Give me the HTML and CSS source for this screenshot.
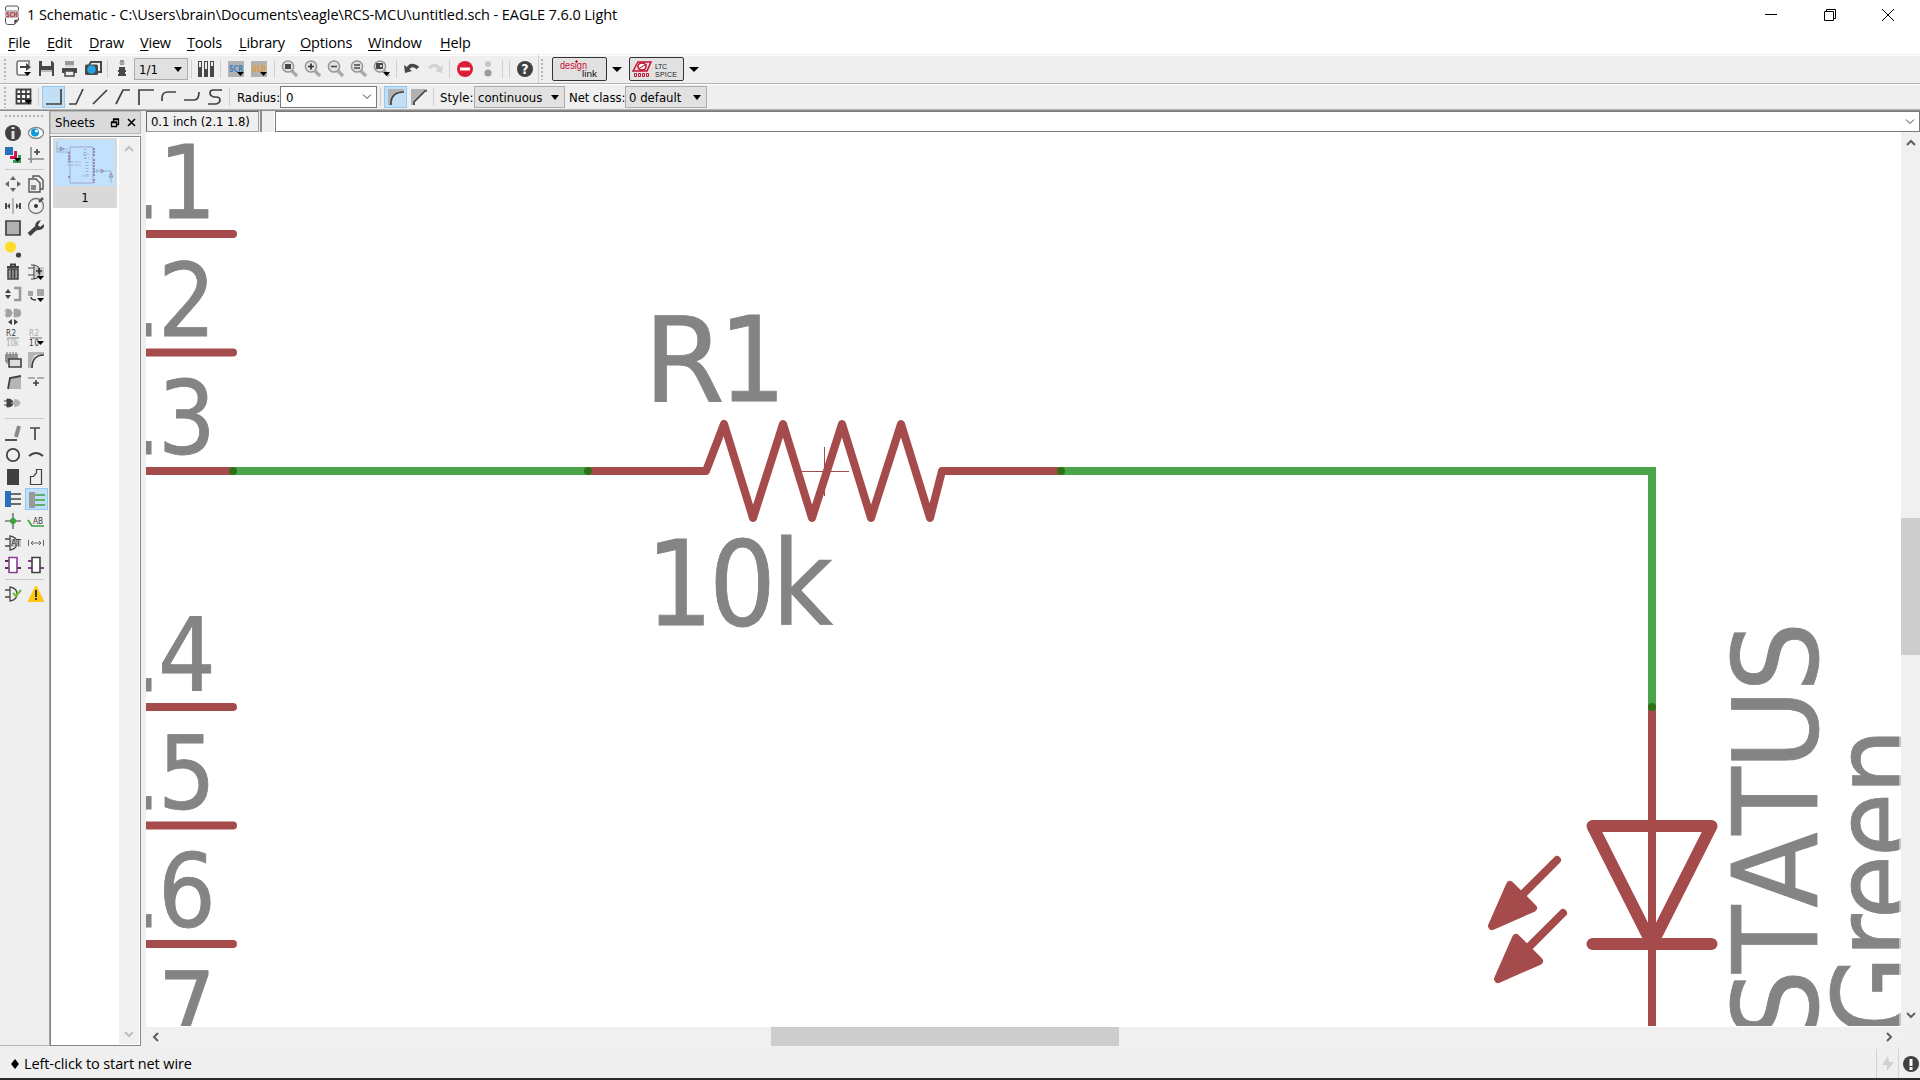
FILE: index.html
```html
<!DOCTYPE html>
<html lang="en">
<head>
<meta charset="utf-8">
<title>1 Schematic - EAGLE 7.6.0 Light</title>
<link rel="stylesheet" href="styles.css">
</head>
<body>
<svg width="0" height="0" class="defs"><defs>
<path id="tri" d="M10 11h7l-3.500 4z" fill="#000"/>
<g id="lens"><path d="M11 11l5 5" stroke="#a9a9a9" stroke-width="3.200"/><circle cx="7" cy="6.500" r="5.600" fill="#e2e2e2" stroke="#969696" stroke-width="1.500"/></g>
</defs></svg>
<div class="window">
<header class="titlebar">
<svg class="app" width="14" height="20" viewBox="0 0 14 20"><path d="M2 1h10q1.500 0 1.500 2v12l-4 4.500h-7Q.500 19 .500 17V3Q.500 1 2 1z" fill="#fafafa" stroke="#555"/><path d="M9 19l.500-4 4-.500z" fill="#333"/><path d="M0 5h14v8H0z" fill="#b9b9b9"/><text x="1" y="11.700" font-size="7" font-weight="bold" fill="#c83c4b" textLength="12" lengthAdjust="spacingAndGlyphs">SCH</text></svg>
<h1>1 Schematic - C:\Users\brain\Documents\eagle\RCS-MCU\untitled.sch - EAGLE 7.6.0 Light</h1>
<div class="controls">
<svg viewBox="0 0 14 14"><path d="M1 6.500h12" /></svg>
<svg viewBox="0 0 14 14"><path d="M1.500 3.500h9v9h-9zM3.500 3V1.500h9v9H11"/></svg>
<svg viewBox="0 0 14 14"><path d="M1 1l12 12M13 1L1 13"/></svg>
</div>
</header>
<nav class="menu"><span><u>F</u>ile</span><span><u>E</u>dit</span><span><u>D</u>raw</span><span><u>V</u>iew</span><span><u>T</u>ools</span><span><u>L</u>ibrary</span><span><u>O</u>ptions</span><span><u>W</u>indow</span><span><u>H</u>elp</span></nav>

<div class="bar actions">
<i class="grip"></i>
<svg class="ic"><path d="M14 5V1H3q-1 1-1 2v10q0 2 2 2h8" fill="#fff" stroke="#777" stroke-width="1.600"/><path d="M5 7h7" stroke="#444" stroke-width="2"/><path d="M11 3l5 4-5 4z" fill="#444"/><use href="#tri" x="-1" y="1"/></svg>
<svg class="ic"><path d="M1 1h13l2 2v13H1z" fill="#484846"/><path d="M4 1h9v5H4zM3 10h11v6H3z" fill="#eee"/><path d="M3 10h11v2H3z" fill="#bbb"/></svg>
<svg class="ic"><path d="M4 1h9v4H4z" fill="#999"/><path d="M1 8h15v5H1z" fill="#484846"/><path d="M4 11h9v5H4z" fill="#eee" stroke="#484846" stroke-width="1.500"/><path d="M4 6h9" stroke="#bbb"/></svg>
<svg class="ic"><path d="M5 5l2-3h10v10h-3" fill="none" stroke="#484846" stroke-width="2"/><rect x="1" y="4.500" width="13" height="10.500" rx="1.500" fill="#484846"/><circle cx="7.500" cy="9.500" r="4.300" fill="#26a0e0"/></svg>
<i class="sep s6"></i>
<svg class="ic"><path d="M9 0v5" stroke="#999" stroke-width="4"/><path d="M6.500 3h5" stroke="#aaa" stroke-width="2"/><path d="M6 7h6v3h1v2h-1v2h1v2H5v-2h1v-2H5v-2h1z" fill="#484846"/></svg>
<div class="combo page">1/1<b></b></div>
<i class="sep s6"></i>
<svg class="ic"><g fill="#484846"><path d="M1 1h4v16H1zM7 1h4v16H7zM13 1h4v16h-4z"/></g><path d="M2 2h2v5H2zM8 2h2v7H8zM14 2h2v4h-2z" fill="#eee"/></svg>
<i class="sep s7"></i>
<svg class="ic"><path d="M1 1h16v16H1z" fill="#b2b2b2"/><text x="2" y="11.500" font-size="8.500" textLength="14" lengthAdjust="spacingAndGlyphs" fill="#3b7fc4" font-weight="bold">SCR</text><use href="#tri" y="1"/></svg>
<svg class="ic"><path d="M1 1h16v16H1z" fill="#b2b2b2"/><text x="2" y="11.500" font-size="8.500" textLength="14" lengthAdjust="spacingAndGlyphs" fill="#e39a35" font-weight="bold">ULP</text><use href="#tri" y="1"/></svg>
<i class="sep s8"></i>
<svg class="ic"><use href="#lens"/><path d="M4 4h6v5H4z" fill="#484846"/></svg>
<svg class="ic"><use href="#lens"/><path d="M4 6.500h6M7 3.500v6" stroke="#333" stroke-width="1.700"/></svg>
<svg class="ic"><use href="#lens"/><path d="M4 6.500h6" stroke="#444" stroke-width="1.500"/></svg>
<svg class="ic"><use href="#lens"/><path d="M4 5h6M4 8h6" stroke="#444" stroke-width="1.500"/></svg>
<svg class="ic"><use href="#lens"/><path d="M3 3h7v6H3z" fill="#484846"/><path d="M7 5h2v2H7z" fill="#ddd"/><use href="#tri" y="1"/></svg>
<i class="sep s7"></i>
<svg class="ic"><path d="M4 10Q8 2 15 8" fill="none" stroke="#484846" stroke-width="3.600"/><path d="M1 5l1 8 7-2z" fill="#484846"/></svg>
<svg class="ic"><path d="M14 10Q10 2 3 8" fill="none" stroke="#d2d2d2" stroke-width="3.200"/><path d="M17 5l-1 8-7-2z" fill="#d2d2d2"/></svg>
<i class="sep s7"></i>
<svg class="ic"><circle cx="9" cy="9" r="8" fill="#dc1e37"/><path d="M4 9h10" stroke="#fff" stroke-width="3"/></svg>
<svg class="ic"><circle cx="9" cy="4" r="3" fill="#c6c6c6"/><circle cx="9" cy="13" r="3.500" fill="#999"/></svg>
<i class="sep s7"></i><i class="sep s7"></i>
<svg class="ic"><circle cx="9" cy="9" r="8" fill="#41413f"/><text x="9" y="14" font-size="14" font-weight="bold" text-anchor="middle" fill="#fff">?</text></svg>
<i class="sep s4 dark"></i><i class="grip g2"></i>
<button class="plug"><svg width="53" height="22"><text x="7" y="11" font-size="11" fill="#c80f32" textLength="27" lengthAdjust="spacingAndGlyphs">design</text><text x="29" y="19" font-size="9" fill="#111" textLength="15" lengthAdjust="spacingAndGlyphs">link</text><path d="M22 3h3v1h-3zM23 2h1v3h-1z" fill="#c80f32"/></svg></button>
<b class="drop"></b>
<button class="plug"><svg width="53" height="22"><path d="M3 13L8 4h13l-4 9z" fill="none" stroke="#c80f32" stroke-width="1.500"/><ellipse cx="12" cy="8.500" rx="4" ry="3.500" fill="#fff" stroke="#c80f32" stroke-width="1.500"/><path d="M8 11l9-5M4.500 15.500h2v3h-2zM8.500 15.500h2v3h-2zM12.500 15.500h2v3h-2zM16.500 15.500h2v3h-2z" fill="none" stroke="#c80f32"/><text x="25" y="11" font-size="7" textLength="12" fill="#222">LTC</text><text x="25" y="19" font-size="7" textLength="22" fill="#222">SPICE</text></svg></button>
<b class="drop"></b>
</div>

<div class="bar params">
<i class="grip"></i>
<svg class="ic"><path d="M1.500 1.500h14v14h-14zM6 1v15M11 1v15M1 6h15M1 11h15" fill="#fff" stroke="#41413f" stroke-width="1.800"/><use href="#tri" y="1"/></svg>
<i class="sep s7"></i>
<div class="on"><svg class="ic bend"><path d="M1 16h15V1"/></svg></div>
<svg class="ic bend"><path d="M1 16h7l7-15"/></svg>
<svg class="ic bend"><path d="M2 16L16 2"/></svg>
<svg class="ic bend"><path d="M2 16L9 2h7"/></svg>
<svg class="ic bend"><path d="M2 17V2h15"/></svg>
<svg class="ic bend"><path d="M2 13V10q0-6 6-6h8"/></svg>
<svg class="ic bend"><path d="M1 12h10q5 0 5-8"/></svg>
<svg class="ic bend"><path d="M16 2H7Q4 2 4 5t4 4h2q4 0 4 3t-4 4H2"/></svg>
<i class="sep s7"></i>
<label class="radius">Radius:</label>
<div class="combo edit">0<svg width="10" height="6"><path d="M1 .500l4 4 4-4" fill="none" stroke="#444"/></svg></div>
<i class="sep s7"></i>
<div class="on"><svg class="ic miter"><path d="M1 1h16v16H1z" fill="#b2b2b2"/><path d="M4 17v-3Q5 4 17 4v13z" fill="#c3dff5"/><path d="M4 17v-3Q5 4 17 4"/></svg></div>
<svg class="ic miter"><path d="M1 1h16v16H1z" fill="#b2b2b2"/><path d="M4 17v-3L15 3h2v14z" fill="#f0f0f0"/><path d="M4 17v-3L15 3h2"/></svg>
<i class="sep s7"></i>
<label class="style">Style:</label><div class="combo cont">continuous<b></b></div>
<label class="net">Net class:</label><div class="combo def">0 default<b></b></div>
</div>

<main>
<aside class="tools">
<i class="hgrip"></i>
<div class="pair">
<svg class="ic"><circle cx="9" cy="9" r="8" fill="#41413f"/><path d="M9 3v2M9 7v8" stroke="#ddd" stroke-width="3"/></svg>
<svg class="ic"><ellipse cx="9" cy="9" rx="7.500" ry="5.500" fill="#fff" stroke="#888" stroke-width="1.300"/><circle cx="8" cy="8.500" r="4" fill="#0a9be1"/><circle cx="9.500" cy="7" r="1.600" fill="#fff"/></svg>
<svg class="ic"><path d="M1 1h8v8H1z" fill="#2a70b8"/><path d="M10 5h3v8H6v-3h4z" fill="#d7144b"/><path d="M14 9h3v8H9v-3h5z" fill="#32a05f"/><use href="#tri" y="1"/></svg>
<svg class="ic"><path d="M4 1v16M1 13h16" stroke="#888" stroke-width="1.500"/><path d="M10 3v6M7 6h6" stroke="#41413f" stroke-width="1.600"/></svg>
</div><hr>
<div class="pair">
<svg class="ic"><path d="M9 1l3 4H6zM9 17l3-4H6zM1 9l4-3v6zM17 9l-4-3v6z" fill="#666"/></svg>
<svg class="ic"><path d="M6 3V1h6l4 4v9h-3M2 4h7l4 4v9H2z" fill="#eee" stroke="#555" stroke-width="1.400"/><path d="M4 10h5v5H4z" fill="#888"/></svg>
<svg class="ic"><path d="M9 1v16" stroke="#999" stroke-width="1.300"/><path d="M1 6h2v6H1zM15 6h2v6h-2zM6 6v6L3 9zM12 6v6l3-3z" fill="#484846"/></svg>
<svg class="ic"><circle cx="9" cy="9" r="7.500" fill="none" stroke="#777" stroke-width="1.300"/><circle cx="9" cy="9" r="2" fill="#333"/><path d="M12 5l4-4" stroke="#555" stroke-width="2.500"/></svg>
<svg class="ic"><path d="M2 2h14v14H2z" fill="#b0b0b0" stroke="#41413f" stroke-width="1.700"/></svg>
<svg class="ic"><path d="M2 15.500L9 9" stroke="#41413f" stroke-width="4"/><path d="M8 10q-1-8 6-9l-3 5 2 2 4-3q1 7-9 6z" fill="#41413f"/></svg>
<svg class="ic"><circle cx="6.500" cy="6" r="5.500" fill="#ffdc28"/><circle cx="14.500" cy="14" r="2.600" fill="#41413f"/></svg><span></span>
<svg class="ic"><path d="M3 4h12M7 3V1.500h4V3" fill="none" stroke="#41413f" stroke-width="2"/><path d="M4 6v10h10V6z" fill="#999" stroke="#41413f" stroke-width="1.500"/><path d="M7.500 6v9M10.500 6v9" stroke="#41413f" stroke-width="1.500"/></svg>
<svg class="ic"><path d="M4 2h3q6 1 6 7t-6 7H4M7 2v14M1 5h6M1 12h6" fill="none" stroke="#484846" stroke-width="1.200"/><path d="M7 4h10v10H7z" fill="#9996"/><path d="M12 5v6M9 8h6" stroke="#333" stroke-width="1.700"/><use href="#tri" y="2"/></svg>
<svg class="ic"><path d="M10 3h6v12h-6" fill="none" stroke="#999" stroke-width="2.500"/><path d="M4 4l3 4H1zM4 14l3-4H1zM7 9h3" fill="#41413f"/></svg>
<svg class="ic"><path d="M1 6h5v5H1zM10 4h7v7h-7z" fill="#a5a5a5"/><path d="M4 12q0 3 5 3" fill="none" stroke="#444" stroke-width="1.500"/><use href="#tri" y="2"/></svg>
<svg class="ic"><path d="M2 2h2q4 0 4 4T4 10H2zM10 2h3q4 0 4 4t-4 4h-3zM0 4h2M0 8h2M8 6h9" fill="#a2a2a2" stroke="#a2a2a2" stroke-width=".6"/><path d="M8 12v6l-4-3zM10 12v6l4-3z" fill="#41413f"/></svg><span></span>
<svg class="ic"><text x="2" y="7" font-size="8" fill="#333" textLength="10">R2</text><path d="M3 9h12" stroke="#aaa" stroke-width="1.500"/><text x="2" y="17" font-size="8" fill="#aaa" textLength="13">10k</text></svg>
<svg class="ic"><text x="2" y="7" font-size="8" fill="#aaa" textLength="10">R2</text><path d="M3 9h12" stroke="#999" stroke-width="1.500"/><text x="2" y="17" font-size="8" fill="#333" textLength="10">10</text><use href="#tri" y="1"/></svg>
<svg class="ic"><path d="M1 3h13v8H1z" fill="#999"/><path d="M3 1v12M6 1v12M9 1v12M12 1v12" stroke="#888" stroke-width="1.300"/><path d="M5 8h12v8H5z" fill="#ddd" stroke="#41413f" stroke-width="1.600"/></svg>
<svg class="ic"><path d="M1 1h16v3H8q-4 4-4 13H1z" fill="#b5b5b5"/><path d="M5 17Q5 4 17 4" fill="none" stroke="#41413f" stroke-width="1.700"/></svg>
<svg class="ic"><path d="M4 16L6 5l11-2v13z" fill="#b5b5b5"/><path d="M4 16L6 5l11-2" fill="none" stroke="#41413f" stroke-width="1.800"/></svg>
<svg class="ic"><path d="M1 5h7M10 5h7" stroke="#999" stroke-width="1.600"/><path d="M9 7v6M6 10h6" stroke="#41413f" stroke-width="1.600"/></svg>
<svg class="ic"><path d="M3 4q6 0 6 4T3 12zM0 6h3M0 10h3" fill="#41413f" stroke="#41413f"/><path d="M10 4q6 0 6 4t-6 4z" fill="#b5b5b5"/><path d="M7 8h10" stroke="#b5b5b5"/></svg><span></span>
</div><hr>
<div class="pair">
<svg class="ic"><path d="M1 16h12" stroke="#41413f" stroke-width="1.800"/><path d="M12 13l3-11" stroke="#888" stroke-width="4"/></svg>
<svg class="ic"><path d="M3 4h10M8 4v12" stroke="#484846" stroke-width="1.700"/></svg>
<svg class="ic"><circle cx="9" cy="9" r="6.200" fill="none" stroke="#41413f" stroke-width="1.800"/></svg>
<svg class="ic"><path d="M2 10q7-6 14 0" fill="none" stroke="#41413f" stroke-width="2"/></svg>
<svg class="ic"><path d="M3 1h12v16H3z" fill="#41413f"/></svg>
<svg class="ic"><path d="M3.500 16.500V8.500h3L9.500 5V1.500h5v15z" fill="none" stroke="#41413f" stroke-width="1.200"/></svg>
<svg class="ic"><path d="M1 1h6v16H1z" fill="#2a70b8"/><path d="M7 4h10M7 9h10M7 14h10" stroke="#41413f" stroke-width="1.600"/></svg>
<div class="on"><svg class="ic"><path d="M2 2h6v16H2z" fill="#9a9a9a"/><path d="M8 5h10M8 10h10M8 15h10" stroke="#37a53c" stroke-width="1.600"/></svg></div>
<svg class="ic"><path d="M9 1v16M1 9h16" stroke="#777" stroke-width="1.600"/><circle cx="9" cy="9" r="3" fill="#37a53c"/></svg>
<svg class="ic"><path d="M1 8l4 6h12" fill="none" stroke="#37a53c" stroke-width="1.700"/><text x="6" y="12" font-size="9" fill="#333" textLength="10" lengthAdjust="spacingAndGlyphs">AB</text></svg>
<svg class="ic"><path d="M6 2q7 1 7 7t-7 7zM1 5h5M1 12h5" fill="none" stroke="#484846" stroke-width="1.300"/><path d="M7 5h10v8H7z" fill="#aaa9"/><text x="7" y="12" font-size="9" fill="#333" textLength="10">AT</text></svg>
<svg class="ic"><path d="M1.500 6v6M16.500 6v6M4 9h10M6 7L4 9l2 2M12 7l2 2-2 2" fill="none" stroke="#666"/></svg>
<svg class="ic"><path d="M1 5h4M1 12h4M13 12h4" stroke="#41413f" stroke-width="1.800"/><path d="M5 1.500h8v15H5z" fill="#fff" stroke="#8c3c96" stroke-width="1.600"/></svg>
<svg class="ic"><path d="M1 5h4M1 12h4M13 12h4" stroke="#8c3c96" stroke-width="1.800"/><path d="M5 1.500h8v15H5z" fill="#fff" stroke="#41413f" stroke-width="1.600"/></svg>
</div><hr>
<div class="pair">
<svg class="ic"><path d="M6 2q7 1 7 7t-7 7zM1 5h5M1 12h5" fill="none" stroke="#484846" stroke-width="1.300"/><path d="M9 8l3 3 5-6" fill="none" stroke="#6eb92d" stroke-width="2"/></svg>
<svg class="ic"><path d="M9 2l7 14H2z" fill="#ffc80f" stroke="#ffc80f" stroke-width="2" stroke-linejoin="round"/><path d="M9 5v7M9 13v2" stroke="#333" stroke-width="2"/></svg>
</div>
</aside>

<section class="sheets">
<div class="dock">Sheets<svg width="30" height="10"><path d="M1.500 4.500h5v4h-5zM3.500 4V1.500h5v5H7M1 4h6M3 1h6" fill="none" stroke="#000" stroke-width="1.300"/><path d="M18 1l7 7M25 1l-7 7" stroke="#000" stroke-width="1.600"/></svg></div>
<div class="list">
<div class="items"><figure>
<svg width="60" height="46" fill="none" stroke-width=".7"><g opacity=".75"><path d="M15 7h23v36H15z" stroke="#8a6fa5"/><path d="M2 2v10h13M3 9h10M6 7v3M38 31h18v12M42 29v4" stroke="#5a9a9f"/><path d="M5 7l4 2-4 2zM46 29l3 2-3 2zM56 33l-2 4h4z" stroke="#8d4b8b"/><path d="M12 22h14M12 25h14M13 17h3M13 21h3M28 14h6M29 18h5M27 36h8" stroke="#7e8cbf" stroke-dasharray="3 1"/><path d="M39 8v8M39 19v18M39 39v4M14 12v10M14 36v3" stroke="#806ea3" stroke-width="2" stroke-dasharray="2 1"/><path d="M30 9v11M32 22v15" stroke="#7e8cbf" stroke-width="3" stroke-dasharray="1 2" opacity=".7"/></g></svg>
<figcaption>1</figcaption></figure></div>
<div class="scroll off"><svg width="10" height="7"><path d="M1 6l4-4 4 4"/></svg><svg width="10" height="7"><path d="M1 1l4 4 4-4"/></svg></div>
</div>
</section>

<section class="editor">
<div class="cmd"><div class="coord">0.1 inch (2.1 1.8)</div><div class="mini"></div><div class="input"><svg width="10" height="6"><path d="M1 .500l4 4 4-4" fill="none" stroke="#444"/></svg></div></div>
<div class="view">
<svg class="sheet" viewBox="146 132 1755 895" width="1755" height="895">
<g class="wire red" stroke-width="8">
<path d="M140 234H233M140 352.500H233M140 471H233M140 707H233M140 825.500H233M140 944H233"/>
<path d="M588 471H706L724 424L753 518L783 424L812 518L842 424L871 518L901 424L930 518L942 471H1061"/>
<path d="M1652 707V1040"/>
<path d="M1592.500 826H1711.500L1652 944ZM1592.500 944H1711.500" stroke-width="12"/>
<path d="M1557 860L1494 923M1563 913L1500 976"/>
<path d="M1492 926L1510 885L1533 908ZM1498 979L1516 938L1539 961Z" class="fillred"/>
</g>
<path class="wire green" stroke-width="8" d="M233 471H588M1061 471H1652V707"/>
<g class="node"><circle cx="233" cy="471" r="4"/><circle cx="588" cy="471" r="4"/><circle cx="1061" cy="471" r="4"/><circle cx="1652" cy="707" r="4"/></g>
<path d="M801 471.500h48M824.500 447v49" stroke="#a54b4b" stroke-width="1"/>
<g class="label pin">
<text x="132 158.500" y="217.500">.1</text><text x="132 158" y="335.500">.2</text><text x="132 158" y="453.500">.3</text><text x="132 158" y="690.500">.4</text><text x="132 158" y="808.500">.5</text><text x="132 158" y="926.500">.6</text><text x="132 158" y="1044.500">.7</text>
</g>
<g class="label">
<text x="643.500 719" y="400.500"><tspan class="wide">R</tspan>1</text>
<text x="646 709 772" y="624.500">10k</text>
<text transform="translate(1816.500 1038) rotate(-90) scale(1.05 1)" x="-2 62 124 193.500 255.500 329.500">STATUS</text>
<text transform="translate(1917 1037) rotate(-90)" textLength="309">Green</text>
</g>
<path d="M1900 132v895M146 1026.500h1755" stroke="#fff"/>
</svg>
<div class="scroll vert"><svg width="10" height="7"><path d="M1 6l4-4 4 4"/></svg><i></i><svg width="10" height="7"><path d="M1 1l4 4 4-4"/></svg></div>
<div class="scroll horz"><svg width="7" height="10"><path d="M6 1L2 5l4 4"/></svg><i></i><svg width="7" height="10"><path d="M1 1l4 4-4 4"/></svg></div>
</div>
</section>
</main>

<footer class="status"><svg width="8" height="12"><path d="M4 1l4 5-4 5-4-5z"/></svg><span>Left-click to start net wire</span>
<div class="lights"><i><svg width="14" height="16"><path d="M7 0L1 9h5v6l7-9H8z" fill="#cfcfcf"/></svg></i><svg class="alert" width="16" height="16"><circle cx="8" cy="8" r="8" fill="#41413f"/><path d="M8 3v7M8 11v3" stroke="#fff" stroke-width="3"/></svg></div></footer>
<div class="taskbar"></div>
</div>
</body>
</html>
```
FILE: styles.css
```css
* { box-sizing: border-box; }
body { margin: 0; background: #f0f0f0; color: #000; font: 13px "DejaVu Sans Condensed", "DejaVu Sans", sans-serif; overflow: hidden; }
.defs { position: absolute; }
.window { width: 1920px; height: 1080px; display: flex; flex-direction: column; background: #efefef; }
svg { display: block; flex: none; }

.titlebar { height: 29px; background: #fff; display: flex; align-items: center; padding-left: 5px; }
.app { margin-right: 8px; }
.titlebar h1 { margin: 0; font: 14.5px "Open Sans", "Noto Sans", sans-serif; letter-spacing: -0.08px; white-space: nowrap; }
.controls { margin-left: auto; display: flex; gap: 44.500px; padding-right: 25px; }
.controls svg { width: 14px; height: 14px; fill: none; stroke: #000; }
.menu { height: 25px; background: #fff; padding: 2px 0 0 8px; display: grid; grid-template-columns: 39px 42px 51px 47px 52px 61px 68px 72px 60px; align-items: center; font: 14.5px "Open Sans", "Noto Sans", sans-serif; letter-spacing: -0.2px; }
.menu u { text-underline-offset: 2px; }

.bar { display: flex; align-items: center; border-top: 1px solid #fff; border-bottom: 1px solid #b4b4b4; }
.actions { height: 30px; border-top-color: #efefef; box-shadow: inset 0 1px #fff; }
.params { height: 26px; }
.ic { width: 18px; height: 18px; margin: 0 2.500px; overflow: visible; }
.grip { width: 12px; height: 22px; background: radial-gradient(circle, #b4b4b4 1px, transparent 1.300px) 3px 0 / 4px 4px repeat-y; }
.g2 { background-position: 0 0; }
.hgrip { display: block; height: 4px; margin: 3px 4px 4px; background: radial-gradient(circle, #b4b4b4 1px, transparent 1.300px) 0 0 / 4px 4px repeat-x; }
.sep { height: 18px; flex: none; background: linear-gradient(#cfcfcf, #cfcfcf) center / 1px 100% no-repeat; }
.s4 { width: 4px; } .s6 { width: 6px; } .s7 { width: 7px; } .s8 { width: 8px; }
.dark { height: 28px; }
.combo { height: 22px; border: 1px solid #adadad; background: #e1e1e1; display: flex; align-items: center; justify-content: space-between; padding: 0 5px 0 4px; flex: none; }
.combo b, .drop { width: 0; height: 0; border: 4px solid transparent; border-top: 5px solid #000; border-bottom: 0; flex: none; }
.page { width: 54px; margin-left: 1px; }
.edit { width: 97px; padding-left: 5px; padding-right: 4px; background: #fff; border-color: #7a7a7a; }
.cont { width: 91px; padding-left: 3px; }
.def { width: 82px; padding-left: 3px; }
.radius { width: 43px; margin-left: 4px; }
.style { width: 34px; margin-left: 3px; }
.net { width: 56px; margin-left: 4px; letter-spacing: -.1px; white-space: nowrap; }
.on { width: 23px; height: 22px; background: #c3dff5; border: 1px solid #90c8f6; display: flex; align-items: center; justify-content: center; }
.bend path, .miter path:last-child { fill: none; stroke: #41413f; stroke-width: 1.700; }
.plug { width: 55px; height: 24px; padding: 0; border: 1px solid #333; border-radius: 2px; background: #e1e1e1; flex: none; }
.drop { border-width: 5px 5px 0; margin: 0 7px 0 5px; }

main { flex: 1; min-height: 0; display: flex; border-top: 1px solid #8c8c8c; }
.tools { width: 50px; border-right: 1px solid #a0a0a0; border-bottom: 1px solid #b4b4b4; }
.pair { display: grid; grid-template-columns: 23px 23px; grid-auto-rows: 22px; align-items: center; padding-left: 1.500px; }
.tools hr { height: 1px; margin: 3px 5px; border: 0; background: #c8c8c8; }
.sheets { width: 91px; display: flex; flex-direction: column; gap: 2px; }
.dock { height: 23px; background: #dadada; border: 1px solid #b9b9b9; display: flex; align-items: center; justify-content: space-between; padding-left: 4px; }
.list { flex: 1; border: 1px solid #828790; display: flex; background: #fff; padding: 1px; }
.items { width: 67px; padding-left: 1px; }
figure { margin: 0; width: 64px; height: 70px; background: #d9d9d9; padding: 2px; }
figure svg { background: #c2e1fd; }
figcaption { text-align: center; padding-top: 4px; }
.scroll { background: #f0f0f0; display: flex; flex-direction: column; align-items: center; }
.scroll path { fill: none; stroke: #606060; stroke-width: 2; }
.scroll svg:last-child { margin-top: auto; }
.scroll.off { width: 20px; padding: 7px 0 6px; }
.scroll.off path { stroke: #bfbfbf; }
.editor { flex: 1; padding-left: 5px; display: flex; flex-direction: column; }
.cmd { height: 21px; display: flex; }
.coord { width: 113px; border: 1px solid #a0a0a0; border-top-color: #696969; border-left-color: #696969; padding: 2px 4px; white-space: nowrap; letter-spacing: -.1px; }
.mini { width: 15px; border-left: 2px solid #8c8c8c; border-right: 1px solid #fff; margin-left: 1px; }
.input { flex: 1; background: #fff; border: 1px solid #7a7a7a; display: flex; align-items: center; justify-content: flex-end; padding-right: 4px; }
.view { flex: 1; display: grid; grid-template: 895px 1fr / 1755px 1fr; }
.sheet { background: #fff; }
.vert { padding: 7px 0 8px; }
.vert i { width: 19px; height: 137px; background: #cdcdcd; margin-top: 372px; }
.horz { flex-direction: row; padding: 0 8px 0 6px; }
.horz i { width: 348px; height: 19px; background: #cdcdcd; margin-left: 612px; align-self: flex-start; }
.scroll.horz svg:last-child { margin: 0 0 0 auto; }
.wire { fill: none; stroke-linecap: round; stroke-linejoin: round; }
.red { stroke: #a54b4b; }
.red .fillred { fill: #a54b4b; }
.green { stroke: #4ba54b; stroke-linejoin: miter; }
.node { fill: #2f7016; }
.label { fill: #848484; stroke: #848484; stroke-width: .8px; font-size: 117px; }
.pin { font-size: 101px; }
.wide { font-family: "DejaVu Sans", sans-serif; }

.status { height: 32px; display: flex; align-items: center; padding: 3px 0 0 11px; font: 14.5px "Open Sans", "Noto Sans", sans-serif; letter-spacing: -.1px; }
.status span { margin-left: 5px; }
.lights { margin-left: auto; display: flex; align-items: center; }
.lights i { width: 23px; height: 29px; display: flex; align-items: center; justify-content: center; border-left: 1px solid #d2d2d2; border-right: 1px solid #d2d2d2; }
.alert { margin: 0 1px 0 4px; }
.taskbar { height: 2px; background: #2b2b2d; }
```
